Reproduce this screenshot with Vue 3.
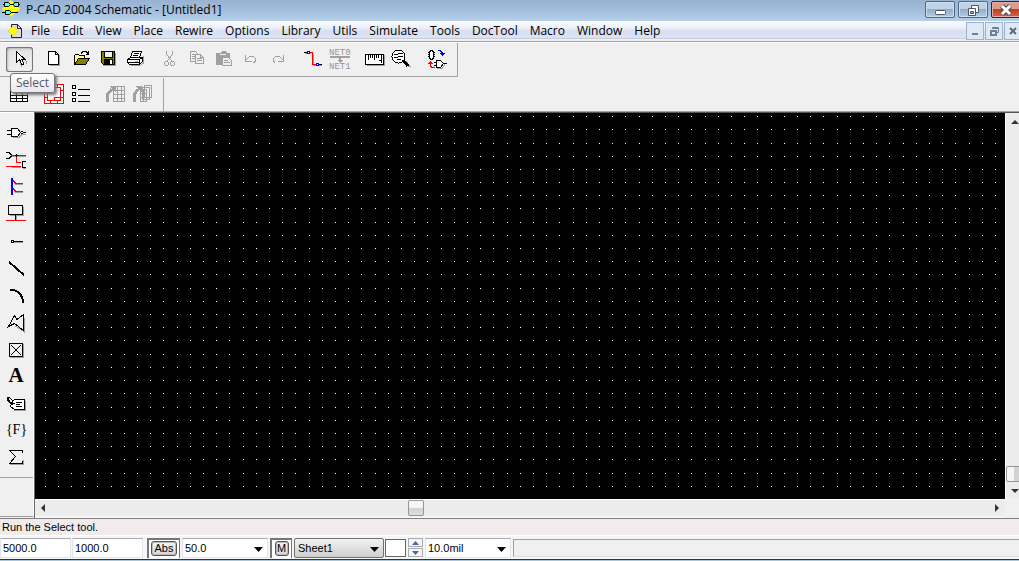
<script setup>
const menus = ['File', 'Edit', 'View', 'Place', 'Rewire', 'Options', 'Library', 'Utils', 'Simulate', 'Tools', 'DocTool', 'Macro', 'Window', 'Help']

const K = 'fill="none" stroke="#000"'
const G = 'fill="none" stroke="#a0a0a0"'
const R = 'fill="none" stroke="#f00"'

const fileTools = [
  [
    { name: 'Select', active: true, art: `<path ${G} d="M14 16l2 4M19.500 13l1.500 4"/><path fill="#fff" stroke="#000" d="M10.500 4.500v11l3-3 2.500 5.500 2-1-2.500-5h3z"/>` }
  ],
  [
    { name: 'New', art: `<path ${G} d="M19.500 8v10.500H10"/><path fill="#fff" stroke="#000" d="M8.500 4.500h7l3 3v10h-10z"/><path ${K} d="M15.500 4.500v3h3"/>` },
    { name: 'Open', art: `<path fill="#ff8" stroke="#000" d="M7.500 17.500v-9l1-1h3l1 1h5v3"/><path fill="#808000" stroke="#000" d="M7.500 17.500l4-6h11l-4 6z"/><path ${K} d="M14 6.500l2-2h3l2 2M21.500 4v4M19 7.500h3"/>` },
    { name: 'Save', art: `<path ${G} d="M21.500 6v12.500H9"/><path fill="#808000" stroke="#000" d="M7.500 4.500h13v13h-11l-2-2z"/><path fill="#f0f0f0" stroke="#000" d="M10.500 4.500h8v6h-8z"/><path fill="#000" d="M10 12h9v6h-9z"/><path fill="#fff" d="M16 13h2v4h-2z"/>` },
    { name: 'Print', art: `<path ${G} d="M22.500 9v7l-3 2.500H10"/><path fill="#fff" stroke="#000" d="M9.500 10.500l2-6h9l-2 6z"/><path ${K} d="M13 6.500h5M12 8.500h5"/><path fill="#fff" stroke="#000" d="M6.500 12.500l3-2h12v4l-3 3h-10l-2-2z"/><path ${K} d="M7 12.500h11.500v5M18.500 12.500l3-2M7 15.500h11"/><path stroke="#cc0" d="M14 14.500h3"/>` }
  ],
  [
    { name: 'Cut', art: `<path ${G} d="M10.500 4v3l5 7M16.500 4v3l-5 7"/><circle cx="10.500" cy="16.500" r="2" ${G}/><circle cx="16.500" cy="16.500" r="2" ${G}/>` },
    { name: 'Copy', art: `<path fill="#f0f0f0" stroke="#a0a0a0" d="M7.500 4.500h5l3 3v7h-8z"/><path ${G} d="M9 7.500h3M9 9.500h5M9 11.500h5"/><path fill="#f0f0f0" stroke="#a0a0a0" d="M12.500 7.500h5l3 3v6h-8zM17.500 7.500v3h3"/><path ${G} d="M14 11.500h5M14 13.500h5"/>` },
    { name: 'Paste', art: `<path fill="#a0a0a0" d="M6 6h4l2-2h3l2 2h3v12H6z"/><path stroke="#f0f0f0" d="M10 7.500h6"/><path fill="#f0f0f0" stroke="#a0a0a0" d="M12.500 10.500h6l3 3v5h-9z"/><path ${G} d="M14 13.500h4M14 15.500h6"/>` },
    { name: 'Undo', art: `<path ${G} d="M8.500 8v6h6M8.500 13.500l4-4h4l2 2v3l-2 1"/>` },
    { name: 'Redo', art: `<path ${G} d="M19.500 8v6h-6M19.500 13.500l-4-4h-4l-2 2v3l2 1"/>` }
  ],
  [
    { name: 'Manual Route', art: `<path ${G} d="M6 6.500h6M14.500 7v11.500H23"/><path ${K} d="M5 5.500h4M20 17.500h3"/><path fill="#f00" d="M11 5h3v12h4v1h-5V6h-2z"/><path fill="#fff" stroke="#00f" d="M8.500 4.500h2v2h-2zM17.500 16.500h2v2h-2z"/>` },
    { name: 'Rename Net', art: `<text x="3" y="8" font-family="Liberation Mono" font-size="9" fill="#959595">NET0</text><path fill="#a0a0a0" d="M4 9h20v2H4zM13 11h2v2h2l-3 3-3-3h2z"/><text x="3" y="22" font-family="Liberation Mono" font-size="9" fill="#959595">NET1</text>` }
  ],
  [
    { name: 'Measure', art: `<path ${G} d="M23.500 8v10.500H6"/><path fill="#fff" stroke="#000" d="M4.500 7.500h18v10h-18z"/><path ${K} d="M7.500 8v5M9.500 8v3M11.500 8v3M13.500 8v5M15.500 8v3M17.500 8v3M20.500 8v8M18 13.500h2"/>` },
    { name: 'Zoom Window', art: `<path stroke="#a0a0a0" stroke-width="2" d="M17 14l5 6"/><circle cx="10.500" cy="9.500" r="6.500" fill="#fff" stroke="#000"/><path ${K} d="M6 7.500h3l2-1h4M6 10.500h3l2-1h4M9 12.500h4"/><path stroke="#000" stroke-width="3" d="M15 13l5 6"/>` }
  ],
  [
    { name: 'Update', art: `<path fill="#fff" stroke="#000" d="M6.500 4.500l2-1 2 1v7l-2 1-2-1zM5 5.500h2M5 7.500h2M5 9.500h2M10 5.500h2M10 7.500h2M10 9.500h2"/><path fill="none" stroke="#00f" d="M15 3.500h2l2 2v3"/><path fill="#00f" d="M16 6h6l-3 3z"/><path ${R} d="M12 20.500H9l-2-2v-3"/><path fill="#f00" d="M4 17h6l-3-3z"/><path ${G} d="M14 21.500h5l3-4"/><path fill="#fff" stroke="#000" d="M13.500 13.500h4l3 3-3 4h-4zM11 15.500h2M11 18.500h2M21 16.500h3"/>` }
  ]
]

const customTools = [
  [{ name: 'Table', art: `<path fill="#fff" stroke="#000" d="M4.500 5.500h17v14h-17z"/><path ${K} d="M4 9.500h18M4 13.500h18M4 16.500h18M10.500 5v15M16.500 5v15"/>` }],
  [
    { name: 'Title Sheet', art: `<path fill="#fff" stroke="#f00" d="M4.500 2.500h19v19h-19z"/><path ${R} d="M7.500 5.500h13v13h-13zM14.500 18v-3h6M4 8.500h3M4 15.500h3M21 8.500h3M21 15.500h3M10.500 2v3M17.500 2v3M10.500 19v3M17.500 19v3"/>` },
    { name: 'Notes', art: `<path fill="#fff" stroke="#000" d="M5.500 3.500h3v3h-3zM5.500 10.500h3v3h-3zM5.500 16.500h3v3h-3z"/><path ${K} d="M11 7.500h12M11 13.500h12M11 19.500h12"/>` }
  ],
  [
    { name: 'Update Table', art: `<path fill="#f0f0f0" stroke="#a0a0a0" d="M11.500 4.500h11v15h-11z"/><path ${G} d="M11 8.500h11M11 12.500h11M11 16.500h11M15.500 4v15M19.500 4v15"/><path ${G} stroke-width="3" d="M5 20v-7l5-6"/><path fill="#a0a0a0" d="M7 4h7v7z"/>` },
    { name: 'Update All', art: `<path fill="#f0f0f0" stroke="#a0a0a0" d="M15.500 3.500h7v12h-7zM13.500 5.500h7v12h-7zM11.500 7.500h6v12h-6z"/><path ${G} d="M12 11.500h6M12 15.500h6M14.500 8v11"/><path ${G} stroke-width="3" d="M5 20v-7l4-6"/><path fill="#a0a0a0" d="M6 4h7v7z"/>` }
  ]
]

const placeTools = [
  { name: 'Part', art: `<path ${G} d="M13 18.500h6l3-3h4"/><path fill="#fff" stroke="#000" d="M11.500 9.500h6l3 4-3 4h-6z"/><path ${K} d="M7 11.500h4M7 15.500h4M24 13.500h2"/><path fill="#fff" stroke="#000" d="M20.500 13.500l1.500-1.500 1.500 1.500-1.500 1.500z"/>` },
  { name: 'Wire', art: `<path ${G} d="M11 10.500h15M12 21.500h9M23 22.500h3"/><path ${K} d="M6 6.500h3l2 2v2l-2 2H6M26 15.500h-4v6h4"/><path ${R} d="M11 9.500h15M16.500 10v6.500H21M6 20.500h15"/><path ${K} d="M16.500 8v3M15 9.500h3"/>` },
  { name: 'Bus', art: `<path ${G} d="M14 9.500l2 2h7M14 17.500l2 2h7"/><path fill="#00f" d="M11 5h2v17h-2z"/><path ${R} d="M13 7.500l3 3h7M13 15.500l3 3h7"/>` },
  { name: 'Port', art: `<path ${G} d="M23.500 7v8.500H10M16.500 16v4"/><path fill="#f0f0f0" stroke="#000" d="M8.500 5.500h14v9h-14z"/><path stroke="#000" d="M15.500 15v5"/><path ${R} d="M6 20.500h20"/>` },
  { name: 'Pin', art: `<path ${G} d="M13 15.500h10"/><path ${K} d="M11.500 13.500h2v2h-2zM14 14.500h9"/>` },
  { name: 'Line', art: `<path ${K} stroke-width="2" d="M9 8l15 13"/>` },
  { name: 'Arc', art: `<path ${K} stroke-width="2" d="M10 9h4q9 3 9 13"/>` },
  { name: 'Polygon', art: `<path ${G} d="M24.500 10v14l-9-6"/><path ${K} d="M8.500 18.500l6-11 2.500 4 6.500-5v16l-9-7z"/>` },
  { name: 'Point', art: `<path ${G} d="M23.500 9v13.500H10"/><path ${K} d="M9.500 8.500h13v13h-13z"/><path ${K} d="M11 10l10 10M21 10L11 20"/>` },
  { name: 'Text', art: `<text x="16" y="20" text-anchor="middle" font-family="Liberation Serif" font-weight="bold" font-size="21">A</text>` },
  { name: 'Attribute', art: `<path ${G} d="M25.500 12v9.500H14"/><path fill="#fff" stroke="#000" d="M11.500 14l3-3.500h10v10h-10l-4-3z"/><path ${K} d="M16 13.500h6M16 15.500h4M16 17.500h6"/><path ${K} d="M12 15L8.500 11V8.500h1l3 3v4M11 14.500h4"/><path ${K} d="M7.500 8v3l4 4"/>` },
  { name: 'Field', art: `<text x="16.500" y="18" text-anchor="middle" font-family="Liberation Serif" font-size="14">{F}</text>` },
  { name: 'IEEE Symbol', art: `<path ${G} d="M23.500 17v4.500H10"/><path ${K} d="M22.500 10V7.500h-13l6 6-6 7h13V18"/>` }
]

// Grid points fall on a 13.2 px pitch and snap down to whole pixels.
const gridPath = Array.from({ length: 80 }, (_, row) =>
  Array.from({ length: 150 }, (_, col) =>
    `M${Math.floor(10 + 13.2 * col)} ${Math.floor(3.6 + 13.2 * row)}h1v1h-1z`
  ).join('')
).join('')
</script>

<template>
  <div class="screen">
    <div class="window">
      <header class="title-bar">
        <svg class="app-icon" width="20" height="18" viewBox="0 0 20 18"><path fill="#ff0" d="M9 0l9 9-9 8-9-8z" /><path stroke="#000" d="M1 4.500h17M0 12.500h16" /><path fill="#5ff" stroke="#000" d="M2.500 2.500h4l2 2-2 2h-4zM16.500 2.500h-4l-1 2 1 2h4zM3.500 10.500h4l2 2-2 2h-4z" /></svg>
        <h1>P-CAD 2004 Schematic - [Untitled1]</h1>
        <div class="win-buttons">
          <button aria-label="Minimize"><svg width="30" height="16"><rect x="10.500" y="8.500" width="10" height="4" rx="1" fill="#fff" stroke="#4c5666" /></svg></button>
          <button aria-label="Restore"><svg width="30" height="16"><path fill="#fff" stroke="#4c5666" d="M13.500 3.500h7v7h-7z" /><path fill="#fff" stroke="#4c5666" d="M10.500 6.500h7v7h-7z" /><path fill="#8fa9c6" stroke="#4c5666" d="M12.500 9.500h3v2h-3z" /></svg></button>
          <button class="close" aria-label="Close"><svg width="30" height="16"><path stroke="#4c4a56" stroke-width="5" d="M11 4l8 8M19 4l-8 8" /><path stroke="#fff" stroke-width="3" d="M11 4l8 8M19 4l-8 8" /></svg></button>
        </div>
      </header>

      <nav class="menu-bar">
        <svg class="doc-icon" width="16" height="16" viewBox="0 0 16 16"><path fill="#ddd" stroke="#222" d="M3.500 1.500h6l4 4v9h-10zM9.500 1.500v4h4" /><path fill="#ff0" stroke="#cc0" stroke-width=".5" d="M5 3l5 5-5 5-5-5z" /></svg>
        <button v-for="m in menus" :key="m">{{ m }}</button>
        <div class="mdi-buttons">
          <button aria-label="Minimize document"><svg width="16" height="16"><path fill="#6e8192" d="M5 10h6v2H5z" /></svg></button>
          <button aria-label="Restore document"><svg width="16" height="16"><path fill="none" stroke="#6e8192" d="M6.500 6V4.500h6v5H11M6 5.500h7" /><path fill="none" stroke="#6e8192" stroke-width="2" d="M5 8h5v4H5z" /></svg></button>
          <button aria-label="Close document"><svg width="16" height="16"><path stroke="#5c6b79" stroke-width="2" d="M5 5l6 6M11 5l-6 6" /></svg></button>
        </div>
      </nav>

      <div class="tool-rows">
        <div class="toolbar main">
          <div v-for="(group, i) in fileTools" :key="i" class="group">
            <button v-for="t in group" :key="t.name" :class="{ active: t.active }" :aria-label="t.name"><svg width="27" height="25" viewBox="0 0 27 25" v-html="t.art" /></button>
          </div>
        </div>
        <div class="toolbar custom">
          <div v-for="(group, i) in customTools" :key="i" class="group">
            <button v-for="t in group" :key="t.name" :aria-label="t.name"><svg width="27" height="25" viewBox="0 0 27 25" v-html="t.art" /></button>
          </div>
        </div>
        <div class="tooltip" role="tooltip">Select</div>
      </div>

      <main class="workspace">
        <aside class="place-bar">
          <div class="place-tools">
            <button v-for="t in placeTools" :key="t.name" :aria-label="t.name"><svg width="33" height="27" viewBox="0 0 33 27" v-html="t.art" /></button>
          </div>
        </aside>
        <div class="view">
          <div class="sheet"><svg width="100%" height="100%" shape-rendering="crispEdges"><path fill="#fff" :d="gridPath" /></svg></div>
          <div class="scroll vertical">
            <button aria-label="Scroll up"><svg width="17" height="17"><path fill="#333" d="M5 11l4-4 4 4z" /></svg></button>
            <span class="track"></span><span class="thumb"></span>
            <button aria-label="Scroll down"><svg width="17" height="17"><path fill="#333" d="M5 7l4 4 4-4z" /></svg></button>
          </div>
          <div class="scroll horizontal">
            <button aria-label="Scroll left"><svg width="17" height="17"><path fill="#333" d="M10 4L6 8l4 4z" /></svg></button>
            <span class="before"></span><span class="thumb"></span><span class="after"></span>
            <button aria-label="Scroll right"><svg width="17" height="17"><path fill="#333" d="M7 4l4 4-4 4z" /></svg></button>
          </div>
        </div>
      </main>

      <footer>
        <p class="prompt">Run the Select tool.</p>
        <div class="status">
          <input class="coord" aria-label="X coordinate" value="5000.0">
          <input class="coord" aria-label="Y coordinate" value="1000.0">
          <span class="frame abs"><button>Abs</button></span>
          <span class="combo"><select aria-label="Grid spacing"><option>50.0</option></select><svg width="9" height="5"><path d="M0 0h9L4.500 5z" /></svg></span>
          <span class="frame macro"><button>M</button></span>
          <span class="combo sheet-select"><select aria-label="Sheet"><option>Sheet1</option></select><svg width="9" height="5"><path d="M0 0h9L4.500 5z" /></svg></span>
          <span class="swatch"></span>
          <span class="spin">
            <button aria-label="Next sheet"><svg width="7" height="4"><path fill="#4a62b8" d="M0 4l3.500-4L7 4z" /></svg></button>
            <button aria-label="Previous sheet"><svg width="7" height="4"><path fill="#4a62b8" d="M0 0h7L3.500 4z" /></svg></button>
          </span>
          <span class="combo"><select aria-label="Line width"><option>10.0mil</option></select><svg width="9" height="5"><path d="M0 0h9L4.500 5z" /></svg></span>
          <span class="info"></span>
        </div>
      </footer>
    </div>
  </div>
</template>

<style>
html, body { margin: 0; background: #f0f0f0; overflow: hidden; }
</style>

<style scoped>
* { box-sizing: border-box; }
button { padding: 0; border: 0; background: none; color: #000; font: inherit; }
svg { display: block; flex: none; }
.screen { overflow: hidden; }
.window {
  display: flex; flex-direction: column; height: 100vh; margin-right: -3px;
  background: #f0f0f0; color: #000; font: 12px/16px "Open Sans", "Noto Sans", sans-serif;
}
.title-bar { display: flex; align-items: flex-start; height: 21px; flex: none; background: linear-gradient(#98b3d1, #a3bedb 50%, #b6d0ea); }
.app-icon { margin: 0 4px 0 2px; }
h1 { flex: 1; margin: 2px 0 0; font-size: 12px; font-weight: 400; }
.win-buttons { display: flex; gap: 3px; margin: 1px 1px 0 0; }
.win-buttons button { width: 30px; height: 17px; border: 1px solid #52687f; border-radius: 2px; background: linear-gradient(#bfd2e8 45%, #92aecb 50%, #b3cce5); box-shadow: inset 0 0 0 1px #cfdfef; display: flex; justify-content: center; }
.win-buttons .close { border-color: #4a1c20; background: linear-gradient(#dd9b8c 45%, #bb3f25 50%, #d0674a); box-shadow: inset 0 0 0 1px #e5aea2; }
.menu-bar { display: flex; align-items: center; gap: 12px; height: 21px; flex: none; padding-left: 8px; background: linear-gradient(#fdfdff, #eceff8 35%, #d9dff0 50%, #dce3f5 85%, #c2c8d8 88%, #f0f0f0 92%); border-bottom: 1px solid #a0a0a0; }
.doc-icon { margin-right: -5px; }
.mdi-buttons { display: flex; gap: 1px; margin-left: auto; }
.mdi-buttons button { width: 18px; height: 18px; border: 1px solid #9db3c9; background: #dfe9f6; display: flex; justify-content: center; }
.tool-rows { position: relative; border-top: 1px solid #fff; border-bottom: 1px solid #a0a0a0; flex: none; }
.toolbar { display: flex; gap: 8px; width: fit-content; padding: 4px 7px 4px 6px; border-right: 1px solid #a0a0a0; }
.toolbar .group:first-child { margin-right: -1px; }
.toolbar.main { border-bottom: 1px solid #a0a0a0; margin-bottom: 1px; }
.group { display: flex; }
.group button { width: 27px; height: 25px; border-radius: 3px; }
.group svg, .place-tools svg { shape-rendering: crispEdges; }
.group .active { background: linear-gradient(#e3e3e3, #f0f0f0); box-shadow: inset 0 0 0 1px #777, inset 1px 1px 3px #888; }
.tooltip { position: absolute; left: 10px; top: 30px; padding: 1px 5px; border: 1px solid #767676; border-radius: 3px; background: linear-gradient(#fff, #e6e7f0); color: #575757; box-shadow: 2px 2px 3px #777; }
.workspace { flex: 1; min-height: 0; display: flex; }
.place-bar { width: 34px; margin-bottom: 1px; border-top: 1px solid #fff; border-right: 1px solid #fff; border-bottom: 1px solid #a0a0a0; }
.place-tools { padding: 6px 0 7px; border-bottom: 1px solid #a0a0a0; }
.place-tools button { display: block; width: 33px; height: 27px; }
.view { flex: 1; display: grid; grid-template: minmax(0, 1fr) 19px / minmax(0, 1fr) 17px; border-top: 1px solid #555; border-left: 1px solid #696969; }
.sheet { background: #000; overflow: hidden; }
.scroll { display: flex; background: #ececec; border-left: 1px solid #fff; }
.scroll.vertical { flex-direction: column; }
.scroll.horizontal { border-top: 1px solid #fff; border-bottom: 2px solid #f6f6f6; border-left: 0; }
.scroll button { width: 17px; height: 17px; }
.track { flex: 1; }
.thumb { border: 1px solid #979797; border-radius: 2px; background: linear-gradient(#f5f5f5 50%, #d2d2d2 52%, #dedede); }
.vertical .thumb { height: 16px; background: linear-gradient(90deg, #f5f5f5 50%, #d2d2d2 52%); }
.horizontal .thumb { width: 16px; }
.before { flex: 356; }
.after { flex: 564; }
footer { flex: none; font: 11px/16px "Liberation Sans", Arial, sans-serif; background: #f6f6f6; border-bottom: 1px solid #a9c8dc; }
.prompt { margin: 0; padding: 0 2px; border-top: 1px solid #808080; border-bottom: 1px solid #fff; background: #f0eceb; }
.status { display: flex; align-items: center; gap: 2px; height: 24px; border-bottom: 1px solid #333; }
input, select { font: inherit; color: #000; border: 0; outline: 0; border-radius: 0; appearance: none; background: #fff; margin: 0; }
.coord { width: 71px; height: 20px; padding: 0 2px; border: 1px solid #e3e5ec; border-top-color: #abadb3; margin-right: -1px; }
.frame { height: 20px; background: #fff; border: 2px solid #777; border-right: 1px solid #777; border-bottom: 0; display: flex; align-items: center; justify-content: center; }
.frame.abs { width: 33px; margin-left: 3px; }
.frame.macro { width: 22px; }
.frame button { border: 1px solid #555; border-radius: 3px; background: linear-gradient(#f5f5f5, #d5d5d5); height: 15px; line-height: 13px; box-shadow: inset 0 0 0 1px #bbb; }
.abs button { width: 26px; }
.macro button { width: 14px; }
.combo { position: relative; width: 86px; height: 20px; border: 1px solid #e3e5ec; border-top-color: #abadb3; background: #fff; }
.combo select { display: block; width: 100%; height: 18px; padding: 0 2px; }
.combo svg { position: absolute; right: 4px; top: 8px; pointer-events: none; }
.sheet-select { width: 90px; border: 1px solid #707070; border-radius: 2px; background: linear-gradient(#f2f2f2, #cfcfcf); }
.sheet-select select { background: none; padding: 0 3px; }
.swatch { width: 21px; height: 18px; margin-left: -1px; background: #fff; border: 1px solid #666; }
.spin { display: flex; flex-direction: column; gap: 1px; width: 15px; }
.spin button { display: flex; align-items: center; justify-content: center; width: 15px; height: 9px; border: 1px solid #aaa; background: #f5f5f5; }
.info { flex: 1; height: 18px; border: 1px solid #a0a0a0; border-bottom-color: #ddd; background: #f0f0f0; }
</style>
